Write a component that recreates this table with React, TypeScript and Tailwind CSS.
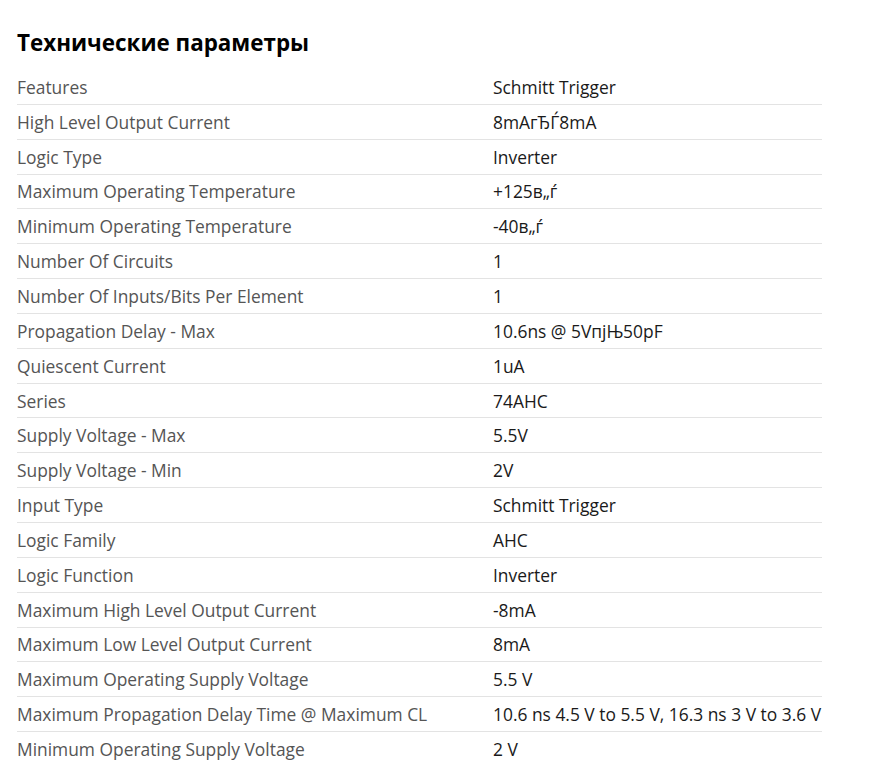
const specs: [string, string][] = [
  ["Features", "Schmitt Trigger"],
  ["High Level Output Current", "8mAгЂЃ8mA"],
  ["Logic Type", "Inverter"],
  ["Maximum Operating Temperature", "+125в„ѓ"],
  ["Minimum Operating Temperature", "-40в„ѓ"],
  ["Number Of Circuits", "1"],
  ["Number Of Inputs/Bits Per Element", "1"],
  ["Propagation Delay - Max", "10.6ns @ 5VпјЊ50pF"],
  ["Quiescent Current", "1uA"],
  ["Series", "74AHC"],
  ["Supply Voltage - Max", "5.5V"],
  ["Supply Voltage - Min", "2V"],
  ["Input Type", "Schmitt Trigger"],
  ["Logic Family", "AHC"],
  ["Logic Function", "Inverter"],
  ["Maximum High Level Output Current", "-8mA"],
  ["Maximum Low Level Output Current", "8mA"],
  ["Maximum Operating Supply Voltage", "5.5 V"],
  ["Maximum Propagation Delay Time @ Maximum CL", "10.6 ns 4.5 V to 5.5 V, 16.3 ns 3 V to 3.6 V"],
  ["Minimum Operating Supply Voltage", "2 V"],
];

export default function App() {
  return (
    <div className="min-h-screen bg-white px-[17px] pt-[26px] font-['Open_Sans',sans-serif]">
      <h2 className="text-[22.4px] leading-[34px] font-bold text-black">Технические параметры</h2>
      <div className="mt-[10px] w-[805px]">
        {specs.map(([label, value], i) => (
          <div
            key={label}
            className={`grid grid-cols-[476px_1fr] py-[4.93px] text-[17.4px] leading-[24px] ${
              i > 0 ? "border-t border-[#e3e3e3]" : ""
            }`}
          >
            <div className="whitespace-nowrap text-[#555]">{label}</div>
            <div className="whitespace-nowrap text-[#1a1a1a]">{value}</div>
          </div>
        ))}
      </div>
    </div>
  );
}
